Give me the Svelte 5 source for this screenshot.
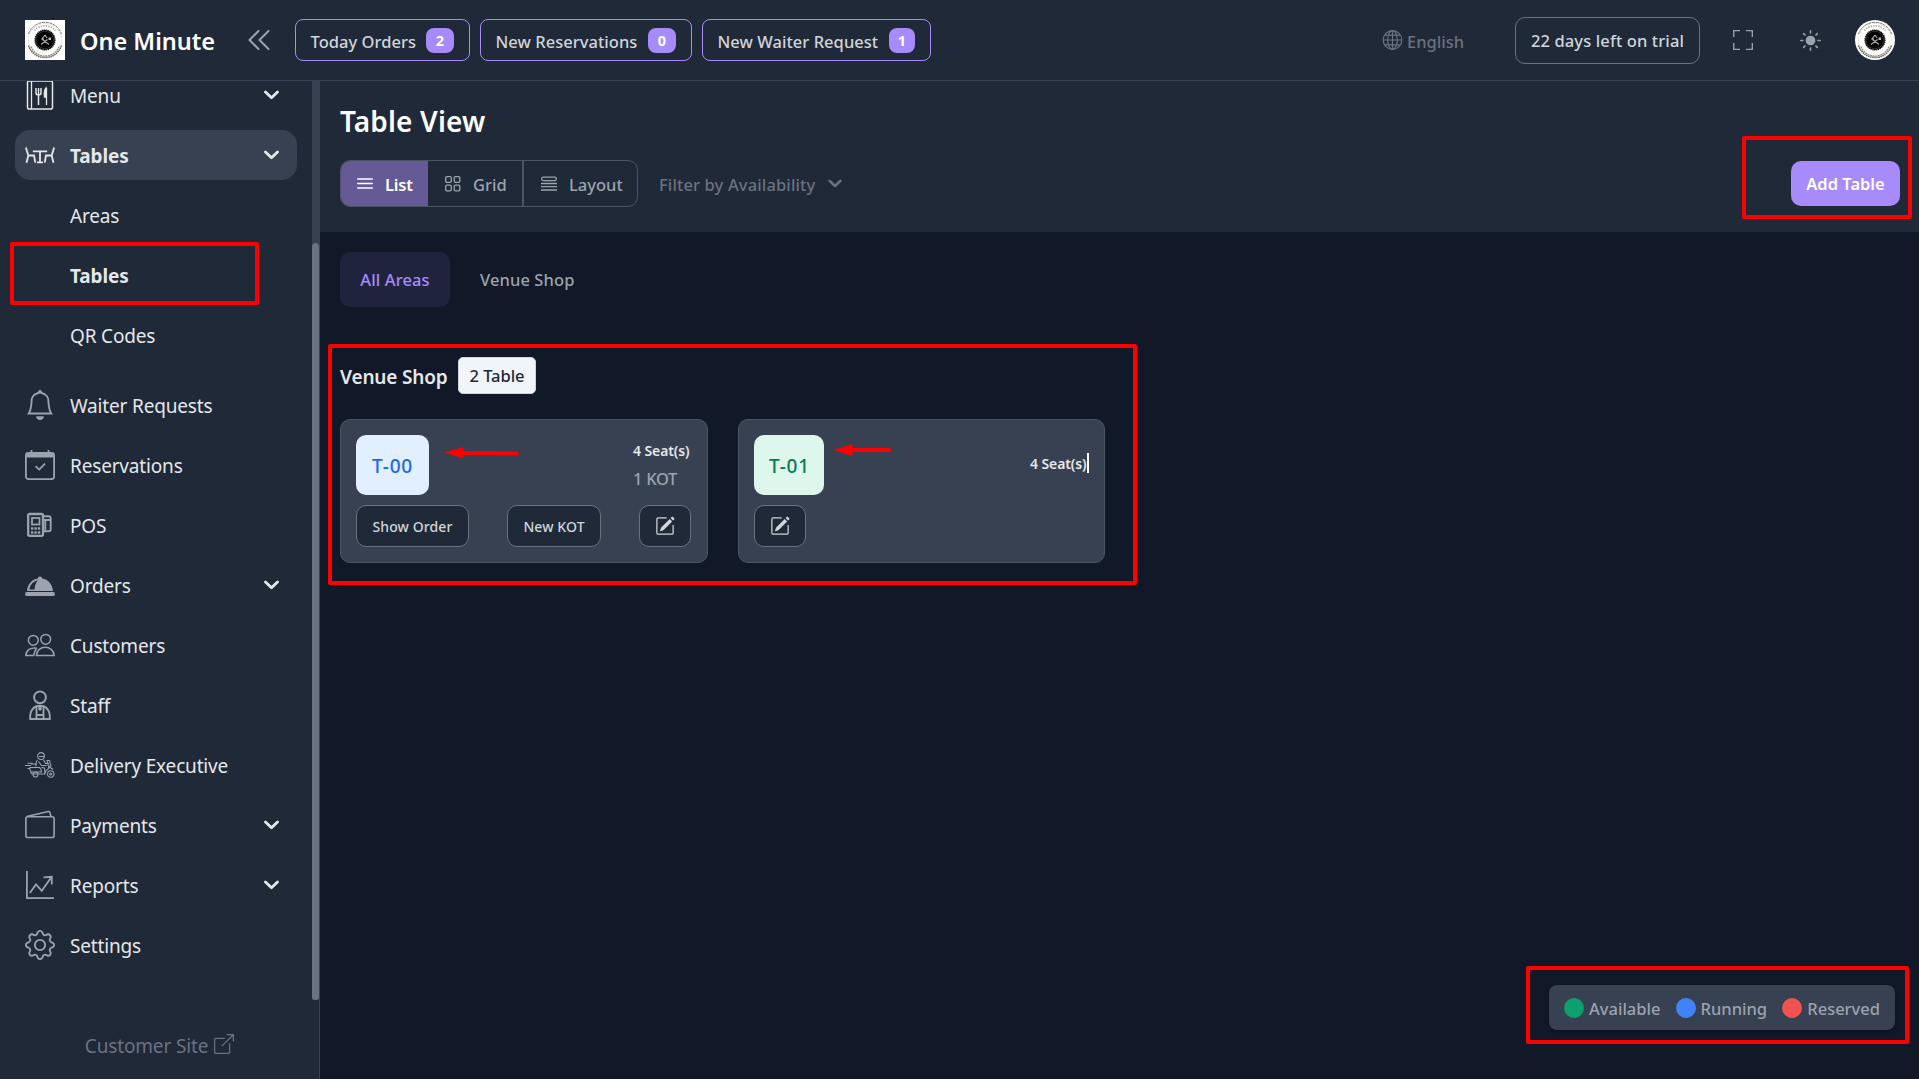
<script>
  const counters = [
    { label: 'Today Orders', count: 2, cls: 'c1' },
    { label: 'New Reservations', count: 0, cls: 'c2' },
    { label: 'New Waiter Request', count: 1, cls: 'c3' },
  ];

  const nav = [
    { label: 'Menu', icon: 'menu', chevron: true, light: true },
    { label: 'Tables', icon: 'tables', chevron: true, light: true, active: true },
    { label: 'Areas', sub: true },
    { label: 'Tables', sub: true, bold: true },
    { label: 'QR Codes', sub: true, last: true },
    { label: 'Waiter Requests', icon: 'bell' },
    { label: 'Reservations', icon: 'calendar' },
    { label: 'POS', icon: 'pos' },
    { label: 'Orders', icon: 'orders', chevron: true },
    { label: 'Customers', icon: 'customers' },
    { label: 'Staff', icon: 'staff' },
    { label: 'Delivery Executive', icon: 'delivery' },
    { label: 'Payments', icon: 'payments', chevron: true },
    { label: 'Reports', icon: 'reports', chevron: true },
    { label: 'Settings', icon: 'gear' },
  ];

  const legend = [
    { label: 'Available', cls: 'green' },
    { label: 'Running', cls: 'blue' },
    { label: 'Reserved', cls: 'red' },
  ];
</script>

{#snippet logo(cls)}
  <svg class={cls} viewBox="0 0 40 40" fill="none">
    <rect width="40" height="40" fill="#fff" />
    <circle cx="20" cy="20" r="16.6" stroke="#e9e2cd" stroke-width=".8" />
    <path d="M3.5 14A17.5 17.5 0 0 1 36.500 14" stroke="#777" stroke-width="1" stroke-dasharray="3 .7" />
    <path d="M9.500 10.500A14.200 14.200 0 0 1 30.500 10.500" stroke="#aaa" stroke-width="1.800" stroke-dasharray="1.300 1.200" />
    <path d="M3.500 25.500A17.300 17.300 0 0 0 36.500 25.500" stroke="#666" stroke-width="1.500" stroke-dasharray="1.500 .6" />
    <path d="M6 26.500A15 15 0 0 0 34 26.500" stroke="#8d8d86" stroke-width="1.200" stroke-dasharray="2 .6" />
    <circle cx="20" cy="20" r="10" fill="#000" stroke="#111" stroke-width="1.200" stroke-dasharray="1.200 .7" />
    <circle cx="20" cy="20" r="8.600" stroke="#888" stroke-width=".6" stroke-dasharray="1 .6" />
    <path d="M20 15l-3 4h2M20 15l2 3M16 24.500l6.500-5M24 24.500l-6.500-5" stroke="#aaa" stroke-width="1.200" />
    <path d="M23.500 17.500h2.500v2.500h-2.500z" fill="#bbb" />
  </svg>
{/snippet}

{#snippet chevron(cls)}
  <svg class={cls} viewBox="0 0 15 10" fill="none" stroke="currentColor" stroke-width="2.800" stroke-linecap="round" stroke-linejoin="round">
    <path d="M1.500 2 7.500 7.800 13.500 2" />
  </svg>
{/snippet}

{#snippet pencil()}
  <svg class="pencil" viewBox="0 0 16 16" fill="currentColor">
    <path d="M15.502 1.940a.5.5 0 0 1 0 .706L14.459 3.690l-2-2L13.502.646a.5.5 0 0 1 .707 0l1.293 1.293zm-1.750 2.456-2-2L4.939 9.210a.5.5 0 0 0-.121.196l-.805 2.414a.25.25 0 0 0 .316.316l2.414-.805a.5.5 0 0 0 .196-.12l6.813-6.814z" />
    <path d="M1 13.500A1.500 1.500 0 0 0 2.500 15h11a1.500 1.500 0 0 0 1.500-1.500v-6a.5.5 0 0 0-1 0v6a.5.5 0 0 1-.5.5h-11a.5.5 0 0 1-.5-.5v-11a.5.5 0 0 1 .5-.5H9a.5.5 0 0 0 0-1H2.500A1.500 1.500 0 0 0 1 2.500z" />
  </svg>
{/snippet}

{#snippet navIcon(name)}
  {#if name === 'bell'}
    <svg class="icon" viewBox="0 0 16 16" fill="currentColor">
      <path d="M8 16a2 2 0 0 0 2-2H6a2 2 0 0 0 2 2M8 1.918l-.797.161A4 4 0 0 0 4 6c0 .628-.134 2.197-.459 3.742-.16.767-.376 1.566-.663 2.258h10.244c-.287-.692-.502-1.490-.663-2.258C12.134 8.197 12 6.628 12 6a4 4 0 0 0-3.203-3.920zM14.220 12c.223.447.481.801.78 1H1c.299-.199.557-.553.78-1C2.680 10.200 3 6.880 3 6c0-2.420 1.720-4.440 4.005-4.901a1 1 0 1 1 1.990 0A5 5 0 0 1 13 6c0 .88.32 4.200 1.220 6" />
    </svg>
  {:else if name === 'gear'}
    <svg class="icon" viewBox="0 0 16 16" fill="currentColor">
      <path d="M8 4.754a3.246 3.246 0 1 0 0 6.492 3.246 3.246 0 0 0 0-6.492M5.754 8a2.246 2.246 0 1 1 4.492 0 2.246 2.246 0 0 1-4.492 0" />
      <path d="M9.796 1.343c-.527-1.790-3.065-1.790-3.592 0l-.094.319a.873.873 0 0 1-1.255.52l-.292-.16c-1.640-.892-3.433.902-2.540 2.541l.159.292a.873.873 0 0 1-.52 1.255l-.319.094c-1.790.527-1.790 3.065 0 3.592l.319.094a.873.873 0 0 1 .52 1.255l-.16.292c-.892 1.640.901 3.434 2.541 2.540l.292-.159a.873.873 0 0 1 1.255.52l.094.319c.527 1.790 3.065 1.790 3.592 0l.094-.319a.873.873 0 0 1 1.255-.52l.292.16c1.640.893 3.434-.902 2.540-2.541l-.159-.292a.873.873 0 0 1 .52-1.255l.319-.094c1.790-.527 1.790-3.065 0-3.592l-.319-.094a.873.873 0 0 1-.52-1.255l.16-.292c.893-1.640-.902-3.433-2.541-2.540l-.292.159a.873.873 0 0 1-1.255-.52zm-2.633.283c.246-.835 1.428-.835 1.674 0l.094.319a1.873 1.873 0 0 0 2.693 1.115l.291-.16c.764-.415 1.600.42 1.184 1.185l-.159.292a1.873 1.873 0 0 0 1.116 2.692l.318.094c.835.246.835 1.428 0 1.674l-.319.094a1.873 1.873 0 0 0-1.115 2.693l.16.291c.415.764-.42 1.600-1.185 1.184l-.291-.159a1.873 1.873 0 0 0-2.693 1.116l-.094.318c-.246.835-1.428.835-1.674 0l-.094-.319a1.873 1.873 0 0 0-2.692-1.115l-.292.16c-.764.415-1.600-.42-1.184-1.185l.159-.291A1.873 1.873 0 0 0 1.945 8.930l-.319-.094c-.835-.246-.835-1.428 0-1.674l.319-.094A1.873 1.873 0 0 0 3.060 4.377l-.16-.292c-.415-.764.42-1.600 1.185-1.184l.292.159a1.873 1.873 0 0 0 2.692-1.115z" />
    </svg>
  {:else}
    <svg class="icon" viewBox="0 0 30 30" fill="none" stroke="currentColor" stroke-width="1.800">
      {#if name === 'menu'}
        <rect x="2.500" y="1" width="25" height="28" rx="1.800" stroke-width="1.500" />
        <path d="M6.500 1v28" stroke-width="1.300" />
        <path d="M11 8v5q0 2 2.500 2t2.500-2V8M13.500 8v17" stroke-width="1.500" />
        <path d="M21 8q-2.500 3-1.500 9h2zM21.500 8v17" stroke-width="1.300" fill="currentColor" />
      {:else if name === 'tables'}
        <path d="M.9 7.500 3.300 15.500H9L10.300 22.700M3.300 15.500 1.500 22.700M29.100 7.500 26.700 15.500H21L19.700 22.700M26.700 15.500l1.800 7.200M7.800 11.300H22.200M15 11.300V22.500M12 22.300H18" />
      {:else if name === 'calendar'}
        <rect x=".9" y="2.900" width="28.200" height="26.200" rx="2.500" />
        <path d="M1.500 3h27v4.500h-27z" fill="currentColor" stroke="none" />
        <path d="M6.500 0v3M23.500 0v3M10.500 16.200l3.700 3.400 5.800-6" />
      {:else if name === 'pos'}
        <rect x="3.200" y="4" width="14.800" height="21.800" rx="1.500" stroke-width="2.300" />
        <rect x="7" y="8" width="7.500" height="6.500" stroke-width="1.800" />
        <path d="M6 18.500h9.300M6 22.500h9.300" stroke-width="2.500" stroke-dasharray="2.400 1" />
        <path d="M19 6.300h4.500q2.200 0 2.200 2.200v10.700q0 2-2.200 2H19M19 10h6.700M20.300 10v11" stroke-width="1.900" />
      {:else if name === 'orders'}
        <rect x="0" y="22" width="30" height="4" rx="2" fill="currentColor" stroke="none" />
        <path d="M2 21C2.500 14 7 9.500 12.800 8.600A2.200 2.200 0 1 1 17.200 8.600C23 9.500 27.500 14 28 21zM4.500 19.500H9.500C9.800 16 10.500 13 13 10.300C8 11.500 5 15 4.500 19.500z" fill="currentColor" fill-rule="evenodd" stroke="none" />
      {:else if name === 'customers'}
        <circle cx="8.300" cy="10.300" r="4.900" stroke-width="1.500" />
        <circle cx="20.700" cy="9.300" r="4.900" stroke-width="1.500" />
        <path d="M11.300 25.500C12 14.500 28.500 14.500 29.200 25.500zM9 25.500H.8C1 20.500 5 17.500 11.800 18.200M9 25.500Q9 21 11.800 18.200" stroke-width="1.500" />
      {:else if name === 'staff'}
        <circle cx="15" cy="7.300" r="5.900" stroke-width="2" />
        <path d="M5.200 29C4.500 21.500 8 15.800 15 15.800S25.500 21.500 24.800 29zM11.500 17v12M18.500 17v12M11.500 25h7" stroke-width="1.900" />
        <path d="M13.300 16h3.400v3.500l-1.700 1.500-1.700-1.500z" fill="currentColor" stroke="none" />
      {:else if name === 'delivery'}
        <g stroke-width="1.050">
          <circle cx="16" cy="6" r="3.400" />
          <path d="M14 6.500h5.400M12.500 10Q10.500 12 11 16.500M18.500 9.800l2 3.700h3.500M13.500 11.500l3 4h5M5 17.500h9.500q2 1.500 2 4.500H6Q4.500 20 5 17.500zM6 14h6M0 15.500h6M2.500 13.300h5M2.500 18.500h3M16.500 17.500l3 .5.500 6H7.500Q5.500 24 6 22M20 24q.5-4 4-5.500l-2-8h2.500l1.500 6M23 15.500l5 4" />
          <circle cx="10.500" cy="24.500" r="2.500" />
          <circle cx="25.800" cy="24" r="3.200" />
          <circle cx="25.800" cy="24" r="1" />
        </g>
      {:else if name === 'payments'}
        <rect x=".9" y="6.700" width="28.200" height="20.800" rx="1.800" stroke-width="1.600" />
        <path d="M1.800 6.500 23.300 1.600q1.200-.2 1.600.9L26 6.500" stroke-width="1.500" />
      {:else if name === 'reports'}
        <path d="M1.900 1V28.100H29M4.800 23 11 14.500 16.800 20.800 26.500 7M18.500 7.300l8.300-.5V14.500" />
      {/if}
    </svg>
  {/if}
{/snippet}

<div class="app">
  <header class="topbar">
    <div class="brand">{@render logo('brand-logo')}<span>One Minute</span></div>
    <svg class="collapse" viewBox="0 0 22 20" fill="none" stroke="currentColor" stroke-width="2" stroke-linecap="round"><path d="M10.500 1 1.500 10l9 9M20.500 1l-9 9 9 9" /></svg>
    <div class="counters">
      {#each counters as c}
        <button class="counter {c.cls}"><span>{c.label}</span><b>{c.count}</b></button>
      {/each}
    </div>
    <div class="tools">
      <span class="lang">
        <svg viewBox="0 0 20 20" fill="none" stroke="currentColor" stroke-width="1.200"><circle cx="10" cy="10" r="9.300" /><ellipse cx="10" cy="10" rx="4.800" ry="9.300" /><path d="M10 .7v18.600M.7 10h18.600M2.300 5.200h15.400M2.300 14.800h15.400" /></svg>
        <span>English</span>
      </span>
      <button class="trial">22 days left on trial</button>
      <svg class="full" viewBox="0 0 20 20" fill="none" stroke="currentColor" stroke-width="1.300"><path d="M.7 7V.7H7M13 .7h6.300V7M19.300 13v6.300H13M7 19.300H.7V13" /></svg>
      <svg class="sun" viewBox="0 0 20 20" stroke="currentColor" stroke-width="1.500" stroke-linecap="round"><circle cx="10" cy="10" r="4.600" fill="currentColor" stroke="none" /><path d="M10 .8v2M10 17.200v2M.8 10h2M17.200 10h2M3.500 3.500l1.300 1.300M15.200 15.200l1.300 1.300M3.500 16.500l1.300-1.300M15.200 4.800l1.300-1.300" /></svg>
      {@render logo('avatar')}
    </div>
  </header>

  <div class="body">
    <aside>
      <div class="scroller">
        <nav>
          {#each nav as item}
            <a class="item" class:active={item.active} class:bold={item.active || item.bold} class:last={item.last} class:light={item.light}>
              {#if item.sub}<span class="icon"></span>{:else}{@render navIcon(item.icon)}{/if}
              <span class="label">{item.label}</span>
              {#if item.chevron}{@render chevron('chev')}{/if}
            </a>
          {/each}
        </nav>
        <div class="track"><div class="thumb"></div></div>
      </div>
      <div class="site">
        <span>Customer Site</span>
        <svg viewBox="0 0 16 16" fill="currentColor"><path d="M8.636 3.500a.5.5 0 0 0-.5-.5H1.500A1.500 1.500 0 0 0 0 4.500v10A1.500 1.500 0 0 0 1.500 16h10a1.500 1.500 0 0 0 1.500-1.500V7.864a.5.5 0 0 0-1 0V14.500a.5.5 0 0 1-.5.5h-10a.5.5 0 0 1-.5-.5v-10a.5.5 0 0 1 .5-.5h6.636a.5.5 0 0 0 .5-.5" /><path d="M16 .5a.5.5 0 0 0-.5-.5h-5a.5.5 0 0 0 0 1h3.793L6.146 9.146a.5.5 0 1 0 .708.708L15 1.707V5.500a.5.5 0 0 0 1 0z" /></svg>
      </div>
    </aside>

    <main>
      <section class="head">
        <h1>Table View</h1>
        <div class="bar">
          <div class="views">
            <button class="view list"><svg viewBox="0 0 16 16" stroke="currentColor" stroke-width="1.500" stroke-linecap="round"><path d="M.7 3h14.600M.7 7.500h14.600M.7 12h14.600" /></svg><span>List</span></button>
            <button class="view grid"><svg viewBox="0 0 16 16" fill="none" stroke="currentColor" stroke-width="1.300"><rect x=".7" y=".7" width="5.600" height="5.600" rx="1.200" /><rect x="9.200" y=".7" width="5.600" height="5.600" rx="1.200" /><rect x=".7" y="9.200" width="5.600" height="5.600" rx="1.200" /><rect x="9.200" y="9.200" width="5.600" height="5.600" rx="1.200" /></svg><span>Grid</span></button>
            <button class="view layout"><svg viewBox="0 0 16 16" fill="none" stroke="currentColor" stroke-width="1.300"><rect x=".7" y="1.200" width="14.600" height="3.400" rx="1.600" /><path d="M0 7.500h16M0 10.700h16M0 14h16" /></svg><span>Layout</span></button>
          </div>
          <div class="filter"><span>Filter by Availability</span>{@render chevron('fchev')}</div>
          <button class="add">Add Table</button>
        </div>
      </section>

      <div class="tabs">
        <button class="tab on">All Areas</button>
        <button class="tab">Venue Shop</button>
      </div>

      <div class="area"><h3>Venue Shop</h3><span class="num">2 Table</span></div>

      <div class="cards">
        <article>
          <div class="row top">
            <span class="code running">T-00</span>
            <div class="meta"><b>4 Seat(s)</b><span>1 KOT</span></div>
          </div>
          <div class="row"><button class="act show">Show Order</button><button class="act kot">New KOT</button><button class="act edit">{@render pencil()}</button></div>
        </article>
        <article>
          <div class="row top">
            <span class="code free">T-01</span>
            <div class="meta single"><b>4 Seat(s)</b><i class="caret"></i></div>
          </div>
          <div class="row"><button class="act edit">{@render pencil()}</button></div>
        </article>
      </div>

      <div class="legend">
        {#each legend as l}
          <span class="key {l.cls}"><i></i><span>{l.label}</span></span>
        {/each}
      </div>
    </main>
  </div>

  <div class="mark m-nav"></div>
  <div class="mark m-add"></div>
  <div class="mark m-cards"></div>
  <div class="mark m-legend"></div>
  <svg class="arrow a1" viewBox="0 0 76 12"><path d="M0 5.500 19.500 0v4L74 4.500q1.500 1.700 0 3.800L19.500 8v3.500z" fill="#f00" /></svg>
  <svg class="arrow a2" viewBox="0 0 59 12"><path d="M0 6 19.500 0v4H57q2.500 2 0 4H19.500v4z" fill="#f00" /></svg>
</div>

<style>
  :global(body) { background: #111827; overflow: hidden; }
  .app { position: relative; width: 1919px; height: 1079px; overflow: hidden; display: flex; flex-direction: column; background: #111827; color: #d1d5db; font-family: "Noto Sans", "Open Sans", sans-serif; font-size: 16.500px; }
  .app :global(*) { box-sizing: border-box; }
  button { font: inherit; color: inherit; background: none; border: 0; padding: 0; margin: 0; white-space: nowrap; }
  svg { flex: none; display: block; }
  span, b { white-space: nowrap; }
  h1, h3 { margin: 0; }

  .topbar { height: 81px; flex: none; border-bottom: 1px solid #374151; background: #1f2937; display: flex; align-items: center; padding: 0 24px 0 25px; }
  .brand { display: flex; align-items: center; gap: 15px; width: 223px; color: #fff; font-size: 23.500px; font-weight: 600; }
  .brand span { padding-top: 2px; }
  .brand-logo { width: 40px; height: 40px; }
  .collapse { width: 22px; height: 20px; color: #9ca3af; margin-right: 25px; }
  .counters { display: flex; gap: 10px; }
  .counter { height: 42px; border: 1px solid #a78bfa; border-radius: 8px; display: flex; align-items: center; justify-content: space-between; padding: 0 15px 0 14.500px; font-weight: 500; }
  .counter span { padding-top: 2px; letter-spacing: .04px; }
  .counter b { height: 25px; width: 28px; border-radius: 8px; background: #a78bfa; color: #fff; font-size: 14.500px; line-height: 25px; font-weight: 700; text-align: center; }
  .c1 { width: 175px; }
  .c2 { width: 212px; }
  .c3 { width: 229px; }
  .c3 b { width: 26px; }
  .tools { margin-left: auto; display: flex; align-items: center; color: #9ca3af; }
  .lang { display: flex; align-items: center; gap: 4px; color: #6b7280; font-weight: 500; width: 133px; }
  .lang svg { width: 21px; height: 20px; }
  .lang span { padding-top: 2px; }
  .trial { width: 185px; height: 47px; border: 1px solid #6b7280; border-radius: 10px; color: #d1d5db; font-weight: 500; margin-right: 33px; padding-top: 1px; letter-spacing: .12px; }
  .full { width: 20px; height: 20px; margin-right: 47px; }
  .sun { width: 21px; height: 21px; margin-right: 34px; }
  .avatar { width: 40px; height: 40px; border-radius: 50%; }

  .body { flex: 1; min-height: 0; display: flex; }
  aside { width: 320px; flex: none; background: #1f2937; border-right: 1px solid #374151; display: flex; flex-direction: column; }
  .scroller { height: 919px; display: flex; overflow: hidden; }
  nav { width: 312px; margin-top: -16px; padding: 0 15px; display: flex; flex-direction: column; }
  .item { height: 50px; width: 282px; margin: 5px 0; flex: none; display: flex; align-items: center; padding: 0 18px 0 10px; border-radius: 15px; color: #e5e7eb; font-size: 19px; letter-spacing: -.17px; }
  .item.last { margin-bottom: 15px; }
  .item.active { background: #374151; }
  .item.bold { font-weight: 700; letter-spacing: -.1px; }
  .item .icon { width: 30px; height: 30px; color: #9ca3af; }
  .item.light .icon { color: #e5e7eb; }
  .label { margin-left: 15px; padding-top: 2px; }
  .chev { width: 15px; height: 10px; margin-left: auto; }
  .track { width: 7px; background: #374151; padding-top: 162px; }
  .thumb { height: 757px; background: #6b7280; border-radius: 4px; }
  .site { flex: 1; display: flex; justify-content: center; gap: 6px; padding-top: 34px; color: #6b7280; font-size: 19px; line-height: 24px; letter-spacing: -.15px; }
  .site svg { width: 20px; height: 20px; }

  main { flex: 1; min-width: 0; display: flex; flex-direction: column; }
  .head { height: 151px; background: #1f2937; padding: 20px 19px 0 20px; }
  h1 { height: 59px; font-size: 28px; line-height: 41px; font-weight: 600; letter-spacing: .15px; color: #fff; }
  .bar { display: flex; align-items: center; height: 47px; }
  .views { display: flex; width: 298px; height: 47px; border: 1px solid #4b5563; border-radius: 10px; overflow: hidden; color: #9ca3af; font-weight: 500; }
  .view { display: flex; align-items: center; gap: 12px; padding-left: 16px; }
  .view svg { width: 16px; height: 16px; }
  .view span { padding-top: 1px; }
  .list { width: 87px; background: #655a96; color: #fff; font-weight: 600; letter-spacing: -.2px; }
  .grid { width: 96px; border-right: 2px solid #4b5563; padding-left: 17px; }
  .layout { flex: 1; padding-left: 17px; }
  .filter { display: flex; align-items: center; gap: 13px; margin-left: 21px; color: #6b7280; font-weight: 500; letter-spacing: .13px; }
  .filter span { padding-top: 1px; }
  .fchev { width: 14px; height: 9px; color: #6b7280; }
  .add { margin-left: auto; width: 109px; height: 45px; border-radius: 10px; background: #a78bfa; color: #fff; font-weight: 600; }

  .tabs { display: flex; gap: 10px; padding: 20px 20px 0; }
  .tab { height: 55px; padding: 0 20px; border-radius: 10px; font-weight: 500; color: #9ca3af; letter-spacing: .1px; }
  .tab.on { width: 110px; padding: 0; background: #20233c; color: #a78bfa; }
  .area { display: flex; align-items: center; height: 37px; margin: 50px 20px 25px; }
  h3 { width: 118px; padding-top: 2px; white-space: nowrap; font-size: 19px; font-weight: 600; letter-spacing: -.17px; color: #e5e7eb; }
  .num { width: 78px; height: 37px; line-height: 36px; text-align: center; background: #f1f5f9; border: 1px solid #cbd5e1; border-radius: 5px; color: #1e293b; font-weight: 500; letter-spacing: -.05px; }
  .cards { display: grid; grid-template-columns: 368px 367px; gap: 30px; padding-left: 20px; }
  article { height: 144px; border: 1px solid #4b5563; border-radius: 10px; background: #374151; padding: 15px 16px 15px 15px; display: flex; flex-direction: column; gap: 10px; }
  .row { display: flex; justify-content: space-between; align-items: center; }
  .top { height: 60px; }
  .code { height: 60px; line-height: 62px; padding: 0 15px; border-radius: 10px; font-size: 19px; font-weight: 500; letter-spacing: .8px; text-align: center; }
  .running { width: 73px; background: #e1effe; color: #1c64f2; }
  .free { width: 70px; background: #def7ec; color: #057a55; }
  .meta { width: 58px; position: relative; }
  .meta b { display: block; font-size: 14px; line-height: 20px; font-weight: 600; letter-spacing: -.1px; color: #e5e7eb; padding-top: 1px; }
  .meta span { display: block; margin-top: 5px; line-height: 25px; color: #9ca3af; font-weight: 500; letter-spacing: -.3px; }
  .meta.single { padding-bottom: 3px; }
  .caret { position: absolute; right: -1px; top: 0; width: 2px; height: 20px; background: #fff; }
  .act { height: 42px; border: 1px solid #6b7280; border-radius: 10px; background: #1f2937; font-size: 14px; font-weight: 500; letter-spacing: .1px; color: #d1d5db; display: flex; align-items: center; justify-content: center; }
  .show { width: 113px; }
  .kot { width: 94px; }
  .edit { width: 52px; }
  .pencil { width: 20px; height: 20px; }

  .legend { margin: auto 24px 49px auto; width: 346px; height: 45px; border-radius: 8px; background: #374151; display: flex; align-items: center; justify-content: space-between; padding: 0 15px; color: #9ca3af; font-weight: 500; box-shadow: 0 2px 5px rgba(0, 0, 0, .3); }
  .key { display: flex; align-items: center; gap: 5px; }
  .key i { width: 20px; height: 20px; border-radius: 50%; }
  .key span { padding-top: 1px; }
  .green i { background: #0e9f6e; }
  .blue i { background: #3f83f8; }
  .red i { background: #f05252; }

  .mark { position: absolute; border: 4px solid #f00; border-radius: 2px; pointer-events: none; }
  .m-nav { left: 10px; top: 242px; width: 249px; height: 63px; }
  .m-add { left: 1742px; top: 136px; width: 170px; height: 83px; }
  .m-cards { left: 328px; top: 344px; width: 809px; height: 241px; }
  .m-legend { left: 1526px; top: 966px; width: 383px; height: 78px; }
  .arrow { position: absolute; }
  .a1 { left: 444px; top: 447px; width: 76px; height: 12px; }
  .a2 { left: 833px; top: 444px; width: 59px; height: 12px; }
</style>
